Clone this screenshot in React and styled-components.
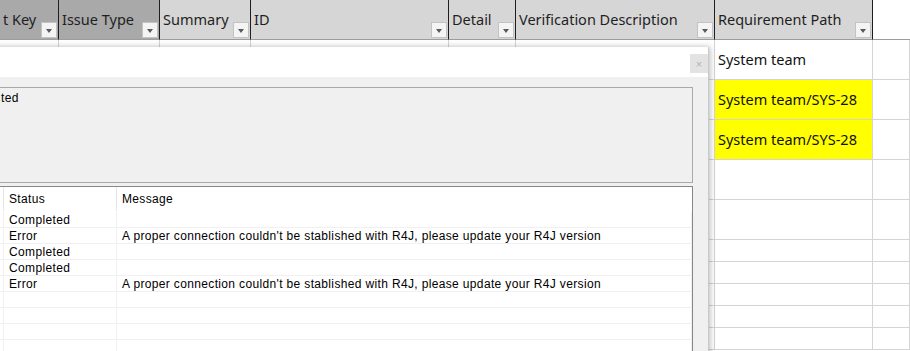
import React from "react";
import styled, { createGlobalStyle } from "styled-components";

const GlobalStyle = createGlobalStyle`
  html, body {
    margin: 0;
    padding: 0;
    background: #ffffff;
    overflow: hidden;
  }
`;

const columns = [
  { label: "t Key", dark: true },
  { label: "Issue Type", dark: true },
  { label: "Summary" },
  { label: "ID" },
  { label: "Detail" },
  { label: "Verification Description" },
  { label: "Requirement Path" },
];

const sheetRows = [
  { height: 40, path: "System team" },
  { height: 40, path: "System team/SYS-28", fill: "#ffff00" },
  { height: 40, path: "System team/SYS-28", fill: "#ffff00" },
  { height: 40 },
  { height: 40 },
  { height: 22 },
  { height: 22 },
  { height: 22 },
  { height: 22 },
  { height: 22 },
];

const logRows = [
  { status: "Completed", message: "" },
  {
    status: "Error",
    message:
      "A proper connection couldn't be stablished with R4J, please update your R4J version",
  },
  { status: "Completed", message: "" },
  { status: "Completed", message: "" },
  {
    status: "Error",
    message:
      "A proper connection couldn't be stablished with R4J, please update your R4J version",
  },
  { status: "", message: "" },
  { status: "", message: "" },
  { status: "", message: "" },
  { status: "", message: "" },
];

const Page = styled.div`
  position: relative;
  width: 910px;
  height: 351px;
  overflow: hidden;
  font-family: "Noto Sans", "Liberation Sans", sans-serif;
`;

const Sheet = styled.div`
  display: grid;
  grid-template-columns: 59px 101px 91px 198px 67px 199px 158px 1fr;
  grid-auto-rows: auto;
`;

const HeaderCell = styled.div`
  height: 40px;
  box-sizing: border-box;
  display: flex;
  align-items: center;
  padding-left: 3px;
  background: ${(p) => (p.$empty ? "#ffffff" : p.$dark ? "#a9a9a9" : "#d6d6d6")};
  border-right: ${(p) => (p.$empty ? "none" : "1px solid #1e1e1e")};
  border-bottom: 1px solid #9c9c9c;
  color: #1f1f1f;
  font-size: 14.5px;
  white-space: nowrap;
  overflow: hidden;
`;

const HeaderLabel = styled.span`
  flex: 1;
  margin-top: -2px;
`;

const FilterButton = styled.span`
  align-self: flex-end;
  position: relative;
  width: 16px;
  height: 16px;
  margin: 0 1px 1px 0;
  box-sizing: border-box;
  background: #f4f4f4;
  border: 1px solid #c3c3c3;
  flex-shrink: 0;

  &::after {
    content: "";
    position: absolute;
    left: 4px;
    top: 6px;
    border-left: 3.5px solid transparent;
    border-right: 3.5px solid transparent;
    border-top: 4px solid #5a5a5a;
  }
`;

const BodyCell = styled.div`
  height: ${(p) => p.$h}px;
  box-sizing: border-box;
  display: flex;
  align-items: center;
  padding-left: 3px;
  background: ${(p) => p.$fill || "#ffffff"};
  border-right: 1px solid #d4d4d4;
  border-bottom: 1px solid #d4d4d4;
  color: #111;
  font-size: 14.5px;
  white-space: nowrap;
  overflow: hidden;
`;

const CellText = styled.span`
  margin-top: -2px;
`;

const Dialog = styled.div`
  position: absolute;
  top: 47px;
  left: -40px;
  width: 749px;
  height: 330px;
  box-sizing: border-box;
  background: #f0f0f0;
  border-right: 1px solid #c9c9c9;
  box-shadow: 1px 0 6px rgba(0, 0, 0, 0.28);
  display: flex;
  flex-direction: column;
  font-family: "Liberation Sans", "DejaVu Sans", sans-serif;
  font-size: 12px;
  letter-spacing: 0.35px;
  color: #000;
`;

const TitleBar = styled.div`
  height: 30px;
  background: #ffffff;
  display: flex;
  justify-content: flex-end;
  align-items: flex-start;
  padding-top: 7px;
  box-sizing: border-box;
`;

const CloseButton = styled.span`
  width: 18px;
  height: 19px;
  background: #e3e3e3;
  color: #b4b4b4;
  font-size: 11px;
  letter-spacing: 0;
  display: flex;
  align-items: center;
  justify-content: center;
`;

const DialogBody = styled.div`
  flex: 1;
  display: flex;
  flex-direction: column;
  gap: 3px;
  padding: 10px 15px 0 10px;
`;

const SummaryBox = styled.div`
  height: 96px;
  box-sizing: border-box;
  border: 1px solid #a9a9a9;
  background: #f0f0f0;
  padding: 3px 0 0 30px;
`;

const LogList = styled.div`
  flex: 1;
  border: 1px solid #828790;
  border-bottom: none;
  background: #ffffff;
  display: grid;
  grid-template-columns: 33px 113px 1fr;
  grid-auto-rows: 16px;
  grid-template-rows: 25px;
  align-content: start;
`;

const LogHeader = styled.div`
  display: flex;
  align-items: center;
  padding-left: 5px;
  border-right: ${(p) => (p.$last ? "none" : "1px solid #e5e5e5")};
  margin-bottom: 1px;
`;

const LogCell = styled.div`
  display: flex;
  align-items: center;
  padding-left: 5px;
  box-sizing: border-box;
  border-right: 1px solid #f0f0f0;
  border-bottom: 1px solid #f0f0f0;
  white-space: nowrap;
`;

export default function App() {
  return (
    <Page>
      <GlobalStyle />
      <Sheet>
        {columns.map((c) => (
          <HeaderCell key={c.label} $dark={c.dark}>
            <HeaderLabel>{c.label}</HeaderLabel>
            <FilterButton />
          </HeaderCell>
        ))}
        <HeaderCell $empty />
        {sheetRows.map((r, i) => (
          <React.Fragment key={i}>
            {columns.map((c, j) => (
              <BodyCell key={j} $h={r.height} $fill={j === 6 ? r.fill : undefined}>
                {j === 6 && r.path ? <CellText>{r.path}</CellText> : null}
              </BodyCell>
            ))}
            <BodyCell $h={r.height} />
          </React.Fragment>
        ))}
      </Sheet>

      <Dialog>
        <TitleBar>
          <CloseButton>×</CloseButton>
        </TitleBar>
        <DialogBody>
          <SummaryBox>ted</SummaryBox>
          <LogList>
            <LogHeader />
            <LogHeader>Status</LogHeader>
            <LogHeader $last>Message</LogHeader>
            {logRows.map((r, i) => (
              <React.Fragment key={i}>
                <LogCell />
                <LogCell>{r.status}</LogCell>
                <LogCell>{r.message}</LogCell>
              </React.Fragment>
            ))}
          </LogList>
        </DialogBody>
      </Dialog>
    </Page>
  );
}
